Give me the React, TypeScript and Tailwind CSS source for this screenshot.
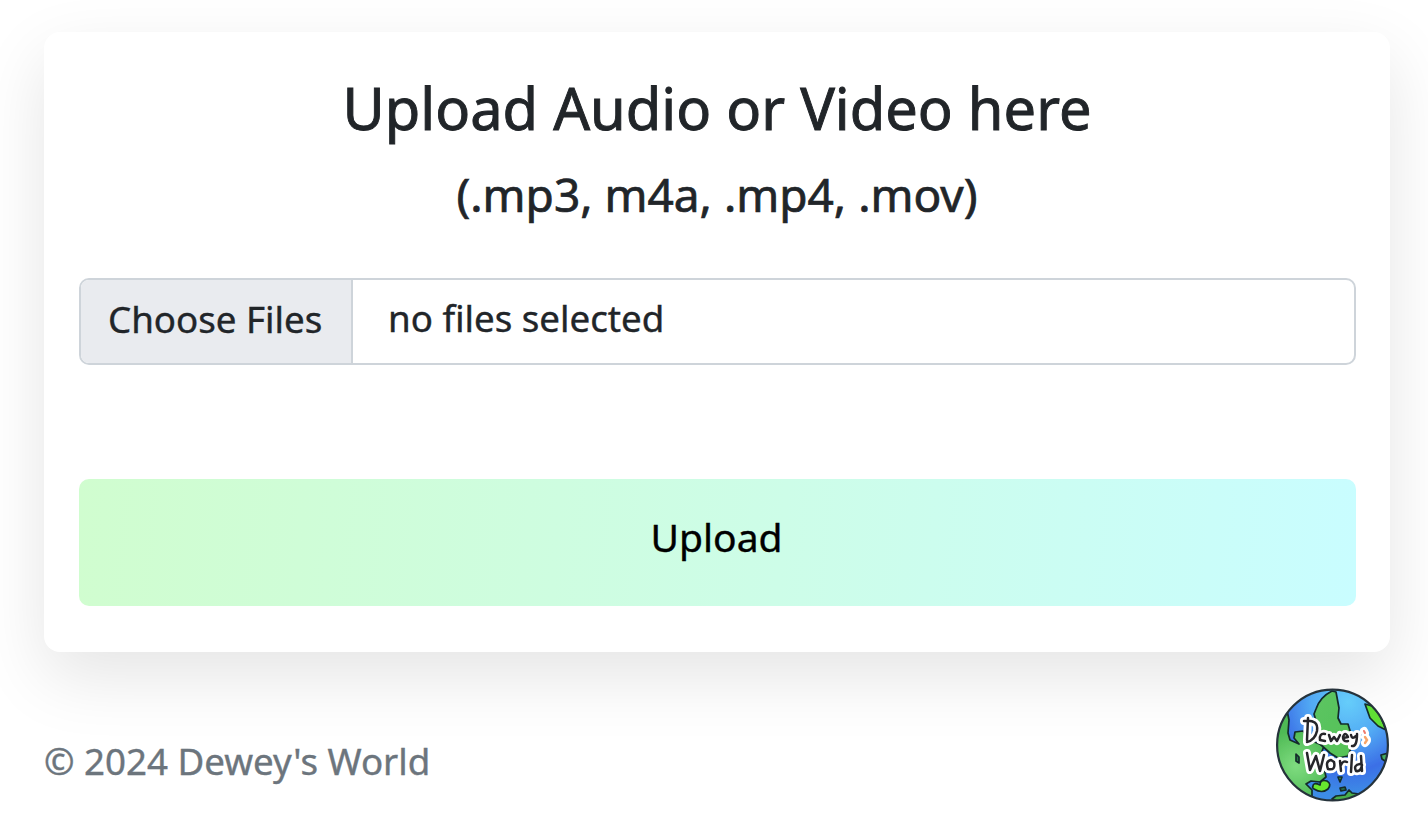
function GlobeLogo() {
  return (
    <svg viewBox="0 0 130 130" className="h-[130px] w-[130px]" aria-label="Dewey's World">
      <defs>
        <radialGradient id="sea" gradientUnits="userSpaceOnUse" cx="80" cy="22" r="92">
          <stop offset="0" stopColor="#66cdfa" />
          <stop offset="0.4" stopColor="#52aaf4" />
          <stop offset="0.75" stopColor="#3b6fe6" />
          <stop offset="1" stopColor="#3c8ce6" />
        </radialGradient>
        <radialGradient id="west" gradientUnits="userSpaceOnUse" cx="28" cy="86" r="36">
          <stop offset="0" stopColor="#7fdc80" />
          <stop offset="1" stopColor="#4fba55" />
        </radialGradient>
        <linearGradient id="north" x1="0" y1="0" x2="1" y2="1">
          <stop offset="0" stopColor="#5cc463" />
          <stop offset="1" stopColor="#55c255" />
        </linearGradient>
        <clipPath id="disc">
          <circle cx="64.5" cy="65" r="55.5" />
        </clipPath>
        <filter id="soften">
          <feGaussianBlur stdDeviation="0.6" />
        </filter>
      </defs>
      <g filter="url(#soften)">
        <circle cx="64.5" cy="65" r="55.5" fill="url(#sea)" />
        <g clipPath="url(#disc)" stroke="#122c2b" strokeWidth="1.7" strokeLinejoin="round" strokeLinecap="round">
          <path d="M19 30 L21 40 L20 53 L22 60 L31 64 L26 58 L27 52 L35 51 L42 60 L56 66 L53 74 L58 97 L52 102 L43 101 L38 104 L44 110 L44 118 L30 118 L4 96 L4 50 Z" fill="url(#west)" />
          <path d="M64 11 Q52 17 48 29 L46 34 L50 48 L52 64 L62 73 L70 78 L80 76 L84 66 L83 54 L80 44 L73 44 L70 38 L71 28 L68 12 Z" fill="url(#north)" />
          <path d="M97 24 L104 26 L112 35 L118 50 L110 46 L102 38 Z" fill="#61df35" />
          <path d="M113 75 L124 72 L120 83 L114 79 Z" fill="#45ad61" />
          <path d="M45 106 Q45 102 52 105 Q52 99 59 101 Q64 104 60 109 Q54 114 46 109 Q44 108 45 106 Z" fill="#67e72d" />
          <path d="M28 74 L31 77 L31 83 L28 81 Z" fill="#257742" />
          <path d="M70 97 L74 97 L72 102 Z" fill="#49bb43" />
          <path d="M72 108 L77 107 L78 110 L73 111 Z" fill="#2a7050" />
          <path d="M64 119 L68 116 L77 115 L81 110 L84 113 L91 114 L87 118 L75 123 Z" fill="#48ad4b" />
          <path d="M99 113 L103 108 L111 105 L117 98 L113 109 L100 118 Z" fill="#48ad65" />
        </g>
        <circle cx="64.5" cy="65" r="55.4" fill="none" stroke="#25333a" strokeWidth="2.2" />
        <g fill="none" stroke="#fff" strokeWidth="8" strokeLinecap="round" strokeLinejoin="round">
          <path d="M40 38 L39 60 M36 41 Q51 39 49 51 Q47 60 39 62 M57 54 Q51 53 52 60 L57 61 M61 55 L63 61 L66 57 L69 61 L72 55 M75 58 L80 57 Q77 51 75 57 Q75 62 80 61 M83 55 Q84 60 88 56 M89 54 Q89 67 84 66 M96 51 L97 53 M97 57 Q101 60 97 63" />
          <path d="M39 73 L42 90 L48 76 L52 91 L56 75 M63 80 Q57 81 60 89 Q68 91 66 82 M72 81 L73 91 M73 85 Q75 80 79 82 M84 75 L83 92 M93 76 L94 91 M92 84 Q85 85 88 91 Q93 92 94 85" />
        </g>
        <g fill="none" stroke="#26272b" strokeWidth="2.5" strokeLinecap="round" strokeLinejoin="round">
          <path d="M40 38 L39 60 M36 41 Q51 39 49 51 Q47 60 39 62 M57 54 Q51 53 52 60 L57 61 M61 55 L63 61 L66 57 L69 61 L72 55 M75 58 L80 57 Q77 51 75 57 Q75 62 80 61 M83 55 Q84 60 88 56 M89 54 Q89 67 84 66" />
          <path d="M39 73 L42 90 L48 76 L52 91 L56 75 M63 80 Q57 81 60 89 Q68 91 66 82 Z M72 81 L73 91 M73 85 Q75 80 79 82 M84 75 L83 92 M93 76 L94 91 M92 84 Q85 85 88 91 Q93 92 94 85" />
        </g>
        <path d="M96 51 L97 53" fill="none" stroke="#ef7a6c" strokeWidth="2" strokeLinecap="round" />
        <path d="M97 57 L99 60 L97 63" fill="none" stroke="#f7a56a" strokeWidth="2.4" strokeLinecap="round" />
      </g>
    </svg>
  );
}

export default function App() {
  return (
    <div className="h-[824px] w-[1428px] overflow-hidden bg-white pt-8 font-['Noto_Sans',sans-serif] text-[#212529] [-webkit-text-stroke:0.4px]">
      <main className="ml-11 flex h-[620px] w-[1346px] flex-col rounded-2xl bg-white px-[35px] pt-[41px] shadow-[0_25px_68px_rgba(0,0,0,0.105)]">
        <h1 className="text-center text-[57.8px] leading-[70px] font-normal whitespace-nowrap [-webkit-text-stroke:0.9px]">Upload Audio or Video here</h1>
        <h2 className="mt-[23px] text-center text-[46px] leading-[56px] font-normal whitespace-nowrap [-webkit-text-stroke:0.7px]">(.mp3, m4a, .mp4, .mov)</h2>
        <label className="mt-[56px] flex h-[87px] w-[1277px] shrink-0 overflow-hidden rounded-[10px] border-2 border-[#ced4da] text-[36.7px] leading-[54px]">
          <span className="w-[272px] shrink-0 border-r-2 border-[#ced4da] bg-[#e9ebef] pt-[12px] pl-[27px] whitespace-nowrap">Choose Files</span>
          <span className="pt-[11px] pl-[35px]">no files selected</span>
        </label>
        <button className="mt-[114px] flex h-[127px] w-[1277px] shrink-0 justify-center rounded-[10px] bg-[linear-gradient(95deg,#d0fdcf_0%,#cdfde8_55%,#c9fdff_100%)] pt-[31px] pr-[2px] text-[39px] leading-[54px] text-black">Upload</button>
      </main>
      <footer className="flex items-start justify-between pt-[28px] pr-[30px] pl-11">
        <p className="pt-[54px] text-[36.7px] leading-[54px] text-[#6c757d]">© 2024 Dewey's World</p>
        <GlobeLogo />
      </footer>
    </div>
  );
}
